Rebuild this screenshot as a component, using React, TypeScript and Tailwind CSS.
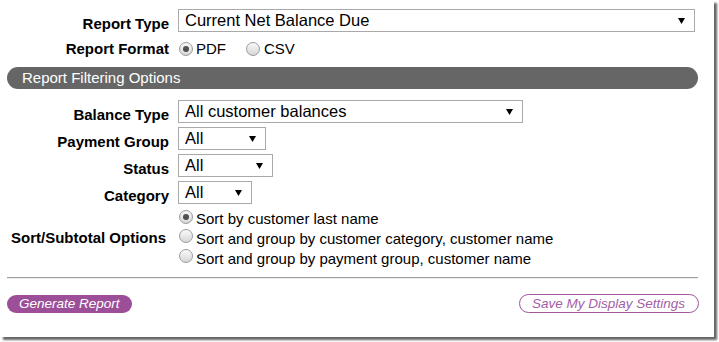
import React from "react";

function Radio({ checked }: { checked?: boolean }) {
  return (
    <span className="w-[14px] h-[14px] rounded-full border border-[#9b9b9b] bg-gradient-to-b from-[#fafafa] to-[#d6d6d6] flex items-center justify-center shrink-0">
      {checked ? <span className="w-[6px] h-[6px] rounded-full bg-[#505050]" /> : null}
    </span>
  );
}

function Select({ text, w }: { text: string; w: string }) {
  return (
    <div className={`${w} h-[23px] border border-[#a9a9a9] bg-white flex items-center justify-between pl-[6px] pr-[9px] text-[16.5px] leading-none`}>
      <span>{text}</span>
      <svg width="7" height="6" viewBox="0 0 7 6">
        <polygon points="0,0 7,0 3.5,6" fill="#000" />
      </svg>
    </div>
  );
}

function Row({ label, children }: { label: string; children: React.ReactNode }) {
  return (
    <div className="flex h-[23px]">
      <div className="w-[169px] self-end text-right font-bold text-[15px] leading-[17px]">{label}</div>
      <div className="ml-[9px]">{children}</div>
    </div>
  );
}

export default function App() {
  return (
    <div className="w-[719px] h-[342px] bg-white text-black font-['Liberation_Sans',Arial,sans-serif]">
      <div className="w-[714px] h-[337px] bg-white shadow-[3px_3px_2px_rgba(0,0,0,0.6)] pt-[9px]">
        <Row label="Report Type">
          <Select text="Current Net Balance Due" w="w-[517px]" />
        </Row>
        <div className="flex h-[17px] mt-[8px] items-center">
          <div className="w-[169px] text-right font-bold text-[15px] leading-[17px]">Report Format</div>
          <div className="ml-[10px] flex items-center text-[15px] leading-[17px]">
            <Radio checked />
            <span className="ml-[3px]">PDF</span>
            <span className="ml-[20px]"><Radio /></span>
            <span className="ml-[4px]">CSV</span>
          </div>
        </div>
        <div className="mt-[10px] ml-[7px] w-[691px] h-[22px] rounded-full bg-[#666666] text-white text-[15px] leading-[22px] pl-[15px]">
          Report Filtering Options
        </div>
        <div className="mt-[11px] flex flex-col gap-[4px]">
          <Row label="Balance Type">
            <Select text="All customer balances" w="w-[345px]" />
          </Row>
          <Row label="Payment Group">
            <Select text="All" w="w-[88px]" />
          </Row>
          <Row label="Status">
            <Select text="All" w="w-[95px]" />
          </Row>
          <Row label="Category">
            <Select text="All" w="w-[74px]" />
          </Row>
        </div>
        <div className="mt-[5px] flex">
          <div className="w-[166px] mr-[3px] self-center pb-[4px] text-right font-bold text-[15px] leading-[17px]">
            Sort/Subtotal Options
          </div>
          <div className="ml-[9px] flex flex-col text-[15px] leading-[20px]">
            <div className="flex h-[20px]">
              <span className="ml-[1px] mt-[1px]"><Radio checked /></span>
              <span className="ml-[3px]">Sort by customer last name</span>
            </div>
            <div className="flex h-[20px]">
              <span className="ml-[1px]"><Radio /></span>
              <span className="ml-[3px]">Sort and group by customer category, customer name</span>
            </div>
            <div className="flex h-[20px]">
              <span className="ml-[1px]"><Radio /></span>
              <span className="ml-[3px]">Sort and group by payment group, customer name</span>
            </div>
          </div>
        </div>
        <div className="mt-[8px] ml-[7px] w-[691px] h-[2px] border-t border-t-[#a0a0a0] border-b border-b-[#ececec]" />
        <div className="mt-[16px] ml-[7px] w-[692px] flex justify-between items-start">
          <div className="w-[125px] h-[18px] rounded-full bg-[#9c4f98] text-white italic text-[13.5px] leading-[18px] pl-[12px]">
            Generate Report
          </div>
          <div className="-mt-[1px] w-[180px] h-[19px] rounded-full border border-[#a0559c] text-[#a35ea6] italic text-[13.5px] leading-[17px] pl-[12px]">
            Save My Display Settings
          </div>
        </div>
      </div>
    </div>
  );
}
